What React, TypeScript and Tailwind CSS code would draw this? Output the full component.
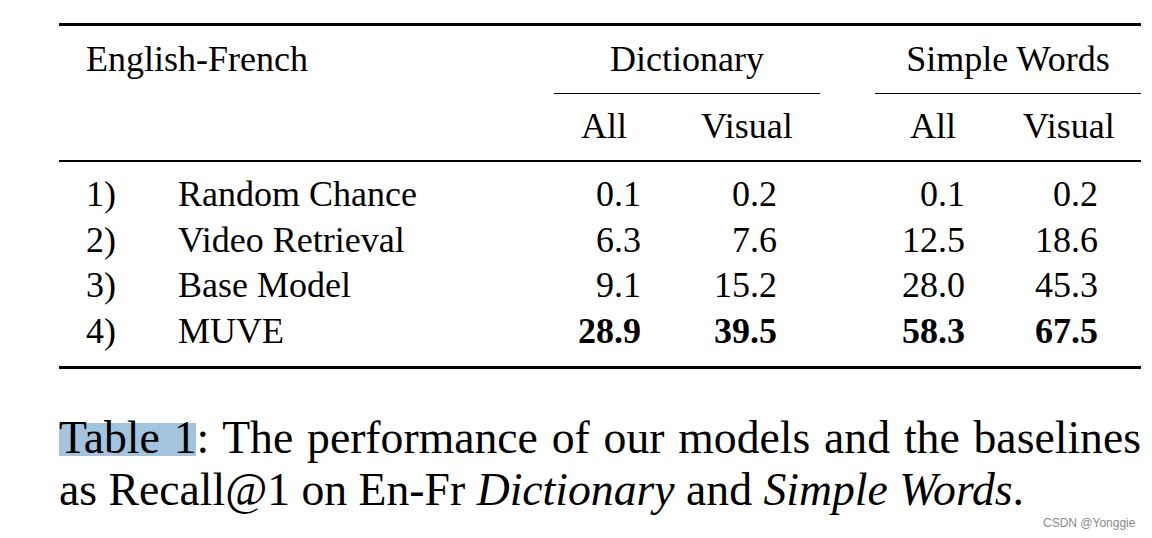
const rows = [
  { n: '1)', name: 'Random Chance', v: ['0.1', '0.2', '0.1', '0.2'], bold: false },
  { n: '2)', name: 'Video Retrieval', v: ['6.3', '7.6', '12.5', '18.6'], bold: false },
  { n: '3)', name: 'Base Model', v: ['9.1', '15.2', '28.0', '45.3'], bold: false },
  { n: '4)', name: 'MUVE', v: ['28.9', '39.5', '58.3', '67.5'], bold: true },
];

function Group({ title, allPad, visualPad }: { title: string; allPad: string; visualPad: string }) {
  return (
    <div className="pt-[11px]">
      <div className="text-center">{title}</div>
      <div className="mt-[11px] h-px bg-black" />
      <div className="mt-[10px] mb-[11px] grid grid-cols-2">
        <span className={allPad}>All</span>
        <span className={visualPad}>Visual</span>
      </div>
    </div>
  );
}

export default function App() {
  return (
    <div className="relative h-[538px] w-[1152px] overflow-hidden bg-white text-black font-['Liberation_Serif','Times_New_Roman',serif]">
      <div className="ml-[59px] w-[1082px] pt-[23px]">
        <div className="h-[3px] bg-black" />

        {/* header */}
        <div className="grid grid-cols-[495px_266px_55px_266px] text-[36px] leading-[45px]">
          <div className="pl-[27px] pt-[11px]">English-French</div>
          <Group title="Dictionary" allPad="pl-[27px]" visualPad="pl-[14px]" />
          <div />
          <Group title="Simple Words" allPad="pl-[35px]" visualPad="pl-[15px]" />
        </div>
        <div className="h-[2px] bg-black" />

        {/* body */}
        <div className="pt-[10px] text-[36px] leading-[45.5px]">
          {rows.map((r) => (
            <div key={r.n} className="grid grid-cols-[495px_133px_133px_55px_133px_133px]">
              <div className="flex pl-[27px]">
                <span className="w-[92px]">{r.n}</span>
                <span>{r.name}</span>
              </div>
              <span className={`pr-[46px] text-right ${r.bold ? 'font-bold' : ''}`}>{r.v[0]}</span>
              <span className={`pr-[43px] text-right ${r.bold ? 'font-bold' : ''}`}>{r.v[1]}</span>
              <span />
              <span className={`pr-[43px] text-right ${r.bold ? 'font-bold' : ''}`}>{r.v[2]}</span>
              <span className={`pr-[43px] text-right ${r.bold ? 'font-bold' : ''}`}>{r.v[3]}</span>
            </div>
          ))}
        </div>
        <div className="mt-[12px] h-[3px] bg-black" />

        {/* caption */}
        <p className="mt-[43px] text-justify text-[45.7px] leading-[52px]">
          <span className="bg-[linear-gradient(to_bottom,transparent_11px,#a3c4dc_11px,#a3c4dc_44px,transparent_44px)]">
            Table 1
          </span>
          : The performance of our models and the baselines as Recall@1 on En-Fr <i>Dictionary</i> and{' '}
          <i>Simple Words</i>.
        </p>
      </div>

      <span className="absolute left-[1043px] top-[517px] text-[12px] leading-none text-[#8a8a8a] font-['Liberation_Sans',Arial,sans-serif]">
        CSDN @Yonggie
      </span>
    </div>
  );
}
